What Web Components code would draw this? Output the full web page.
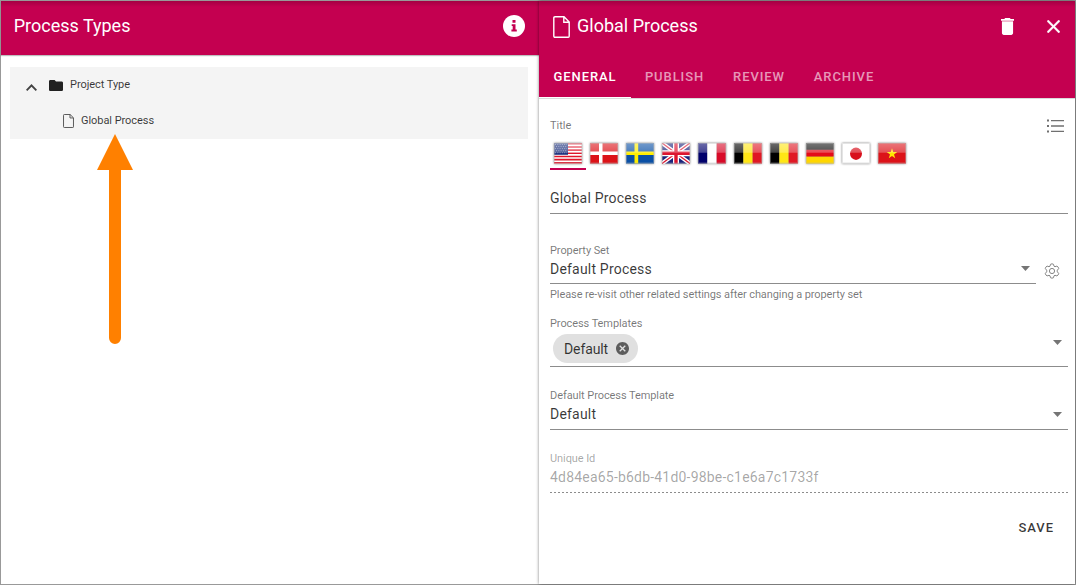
<!DOCTYPE html>
<html lang="en">
<head>
<meta charset="utf-8">
<title>Process Types</title>
<style>
html,body{margin:0;height:100%}
body{font-family:Roboto,"Liberation Sans",sans-serif;color:rgba(0,0,0,.78);background:#fff;overflow:hidden}
</style>
</head>
<body>
<process-app></process-app>
<script>
const define = (name, html, setup) => {
  const template = document.createElement('template');
  template.innerHTML = html;
  customElements.define(name, class extends HTMLElement {
    constructor() {
      super();
      this.attachShadow({mode: 'open'}).append(template.content.cloneNode(true));
    }
    connectedCallback() { if (setup) setup(this, this.shadowRoot); }
  });
};

const icons = {
  file: ['0 0 17 22', '<path d="M2 .8H11L16.2 6V20.2Q16.2 21.2 15.2 21.2H2Q.8 21.2.8 20V2Q.8.8 2 .8ZM10.8.8V6.2H16.2" fill="none" stroke="currentColor" stroke-width="var(--stroke,1.4)"/>'],
  folder: ['2 4 20 16', '<path d="M10 4H4C2.9 4 2 4.9 2 6V18C2 19.1 2.9 20 4 20H20C21.1 20 22 19.1 22 18V8C22 6.9 21.1 6 20 6H12Z"/>'],
  chevron: ['6 8 12 7.4', '<path d="M7.41 15.4 12 10.8 16.59 15.4 18 14 12 8 6 14Z"/>'],
  info: ['0 0 22 22', '<circle cx="11" cy="11" r="11"/><path fill="#c40050" d="M9.5 5h3v2.8h-3zM8.700 9.200h3.800v5.300h1.300v1.900H8.400v-1.900h1.300v-3.400h-1z"/>'],
  trash: ['5 3 14 18', '<path d="M6 19C6 20.1 6.9 21 8 21H16C17.1 21 18 20.1 18 19V7H6ZM19 4H15.5L14.5 3H9.5L8.500 4H5V6H19Z"/><path d="M6 6H18V7H6Z" opacity=".8"/>'],
  close: ['5 5 14 14', '<path stroke="currentColor" stroke-width=".5" d="M19 6.41 17.59 5 12 10.59 6.41 5 5 6.41 10.59 12 5 17.59 6.41 19 12 13.41 17.59 19 19 17.59 13.41 12Z"/>'],
  list: ['0 0 18 14', '<path d="M0 .5h2v2H0zM0 6h2v2H0zM0 11.500h2v2H0zM4 .9h13v1.300H4zM4 6.200h13v1.600H4zM4 11.700h13V13H4z"/>'],
  caret: ['7 10 10 5', '<path d="M7 10 12 15 17 10Z"/>'],
  gear: ['0 0 16 16', '<g fill="none" stroke="currentColor" stroke-width="1"><circle cx="8" cy="8" r="2.600"/><path d="M6.500 1.300Q8 .3 9.500 1.300L10 3.200 11 3.700 12.900 3.100Q14.600 3.900 14.700 5.600L13.300 7.200V8.800L14.700 10.400Q14.600 12.100 12.900 12.900L11 12.300 10 12.800 9.500 14.700Q8 15.700 6.500 14.700L6 12.800 5 12.300 3.100 12.900Q1.400 12.100 1.300 10.400L2.700 8.800V7.200L1.300 5.600Q1.400 3.900 3.100 3.100L5 3.700 6 3.200Z"/></g>'],
  remove: ['2 2 20 20', '<path d="M12 2C6.470 2 2 6.470 2 12S6.470 22 12 22 22 17.530 22 12 17.530 2 12 2ZM17 15.590 15.590 17 12 13.410 8.410 17 7 15.590 10.590 12 7 8.410 8.410 7 12 10.590 15.590 7 17 8.410 13.410 12Z"/>']
};
define('ui-icon', `<style>:host{display:block;flex:none}svg{display:block;width:100%;height:100%;fill:currentColor}</style><svg preserveAspectRatio="none"></svg>`, (el, root) => {
  const [box, art] = icons[el.getAttribute('name')];
  const svg = root.querySelector('svg');
  svg.setAttribute('viewBox', box);
  svg.innerHTML = art;
});

const bands = (colors, vertical) => colors.map((c, i) => vertical
  ? `<rect x="${i * 28 / 3}" width="9.4" height="20" fill="${c}"/>`
  : `<rect y="${i * 20 / 3}" width="28" height="6.700" fill="${c}"/>`).join('');
const flags = {
  us: '<path fill="#fff" d="M0 0h28v20H0z"/><path stroke="#e0162b" stroke-width="1.540" d="M0 .77h28M0 3.850h28M0 6.930h28M0 10h28M0 13.100h28M0 16.200h28M0 19.250h28"/><path fill="#1b2f7c" d="M0 0h14v11.500H0z"/><path stroke="#fff" stroke-width=".8" stroke-opacity=".55" stroke-dasharray="1 1.300" d="M1 1.500h12M2 3.500h11M1 5.500h12M2 7.500h11M1 9.500h12"/>',
  dk: '<path fill="#dc1218" d="M0 0h28v20H0z"/><path fill="#fff" d="M9 0h3.500v20H9zM0 8.300h28v3.500H0z"/>',
  se: '<path fill="#0a50a5" d="M0 0h28v20H0z"/><path fill="#fe0" d="M8.500 0h3.700v20H8.500zM0 8.300h28v3.500H0z"/>',
  gb: '<path fill="#1a237b" d="M0 0h28v20H0z"/><path stroke="#fff" stroke-width="4" d="M0 0 28 20M28 0 0 20"/><path stroke="#dc1530" stroke-width="1.300" d="M0 0 28 20M28 0 0 20"/><path fill="#fff" d="M11 0h6v20h-6zM0 7h28v6H0z"/><path fill="#dc1530" d="M12.300 0h3.400v20h-3.400zM0 8.300h28v3.400H0z"/>',
  fr: bands(['#00006b', '#fff', '#d80a28'], true),
  be: bands(['#000', '#ffe615', '#e01824'], true),
  de: bands(['#111', '#e30b18', '#ffd600']),
  jp: '<path fill="#fff" d="M0 0h28v20H0z"/><circle cx="14" cy="10.500" r="6" fill="#d8101c"/>',
  vn: '<path fill="#dc1218" d="M0 0h28v20H0z"/><path fill="#ffe600" d="m14 5 1.250 3.800h4L16 11.100l1.240 3.800L14 12.600l-3.240 2.300L12 11.100 8.750 8.800h4Z"/>'
};
define('flag-tab', `<style>
:host{display:flex;flex:none;box-sizing:border-box;width:36px;height:37px;padding:10px 4.500px 0 3.500px;border-bottom:2px solid transparent}
:host([selected]){border-color:#c40050}
svg{display:block;width:28px;height:20.500px;filter:drop-shadow(0 .7px .8px rgba(0,0,0,.5))}
</style><svg viewBox="0 0 28 20" preserveAspectRatio="none"><defs><linearGradient id="g" x2="0" y2="1"><stop stop-color="#fff" stop-opacity=".42"/><stop offset="1" stop-color="#fff" stop-opacity=".26"/></linearGradient></defs><g id="art"></g><path fill="url(#g)" d="M0 0h28v9.500H0Z"/><path fill="none" stroke="#bbb" stroke-opacity=".4" stroke-width="1" d="M.5.5h27v19H.5z"/></svg>`, (el, root) => {
  root.querySelector('#art').innerHTML = flags[el.getAttribute('country')];
});

define('tool-bar', `<style>
:host{display:flex;align-items:center;height:50px;color:#fff;font-size:18px}
.t{flex:1;display:flex;align-items:center;white-space:nowrap}
</style><slot name="icon"></slot><div class="t"><slot></slot></div><slot name="action"></slot>`);

define('tab-item', `<style>
:host{display:flex;align-items:center;justify-content:center;box-sizing:border-box;height:43px;border-bottom:1px solid transparent;color:rgba(255,255,255,.6);font-size:13px;font-weight:500;letter-spacing:.92px;white-space:nowrap}
:host([selected]){color:#fff;border-color:#fff}
</style><slot></slot>`);

define('tree-row', `<style>
:host{display:flex;align-items:center;height:36px;font-size:11px;letter-spacing:-.05px;white-space:nowrap;box-sizing:border-box;padding-bottom:1px}
</style><slot></slot>`);

define('form-field', `<style>
:host{display:block}
.label{height:16px;line-height:18px;font-size:11px;letter-spacing:-.08px;color:rgba(0,0,0,.54);white-space:nowrap}
.box{display:flex;box-sizing:border-box;align-items:flex-start;border-bottom:1px solid #8c8c8c;height:var(--box,27px)}
.value{flex:1;line-height:22px;font-size:14px;letter-spacing:.2px;white-space:nowrap}
ui-icon{width:9px;height:5px;color:#757575;margin:var(--caret-top,9px) 6px 0 0}
:host([plain]) ui-icon{display:none}
:host([disabled]) .label,:host([disabled]) .value{color:rgba(0,0,0,.36)}
:host([disabled]) .box{border-bottom:0;background:repeating-linear-gradient(90deg,#8c8c8c 0 2px,transparent 2px 4px) bottom/100% 1px no-repeat}
</style><div class="label"></div><div class="box"><div class="value"><slot></slot></div><ui-icon name="caret"></ui-icon></div>`, (el, root) => {
  root.querySelector('.label').textContent = el.getAttribute('label');
});

define('value-chip', `<style>
:host{display:inline-flex;box-sizing:border-box;align-items:center;justify-content:space-between;width:85px;height:29px;margin:3px 0 0 3px;padding:0 9px 0 11px;border-radius:15px;background:#e0e0e0;letter-spacing:-.1px}
ui-icon{width:13px;height:13px;color:#5c5c5c}
</style><span><slot></slot></span><ui-icon name="remove"></ui-icon>`);

define('pointer-arrow', `<style>:host{display:block}svg{display:block}</style><svg width="36" height="210" viewBox="0 0 36 210" fill="#ff8000"><path d="M18 0 36 36H24V204a6 6 0 0 1-12 0V36H0Z"/></svg>`);

define('process-tree', `<style>
:host{display:block;position:relative;width:538px;flex:none;background:#fff}
header{height:54px;box-sizing:border-box;padding:0 14px 0 12.700px;background:linear-gradient(#a40043,#c40050 6px);box-shadow:0 1px 1px rgba(0,0,0,.25)}
tool-bar{height:49px}
.info{width:22px;height:22px;margin-top:1px}
.tree{margin:12px 11px 0 9px;background:#f4f4f4;height:72px}
.up{width:11px;height:7px;margin:6px 0 0 16px;color:#424242}
.folder{width:14px;height:11px;margin:1px 7px 0 12px;color:#212121}
.file{width:11px;height:14px;margin:1px 7px 0 53px;color:#555;--stroke:1.5}
pointer-arrow{position:absolute;left:96px;top:133px}
</style>
<header><tool-bar>Process Types<ui-icon slot="action" class="info" name="info"></ui-icon></tool-bar></header>
<div class="tree">
<tree-row><ui-icon class="up" name="chevron"></ui-icon><ui-icon class="folder" name="folder"></ui-icon><span>Project Type</span></tree-row>
<tree-row><ui-icon class="file" name="file"></ui-icon><span>Global Process</span></tree-row>
</div>
<pointer-arrow></pointer-arrow>`);

define('process-editor', `<style>
:host{display:block;flex:1;min-width:0;background:#fff;box-shadow:0 0 3px rgba(0,0,0,.5);z-index:1}
header{height:97px;background:linear-gradient(#a40043,#c40050 6px);box-shadow:0 1px 0 #dadada}
tool-bar{height:54px;padding:0 15px 5px 14px;box-sizing:border-box}
.file{width:17px;height:22px;margin:3px 7px 0 0}
.trash{width:13px;height:17px;margin-top:1px}
.close{width:13px;height:13px;margin-left:33px;margin-top:1px}
nav{display:flex}
.body{padding:19px 7px 0 11px;display:flex;flex-direction:column}
.head{display:flex;justify-content:space-between;height:16px;line-height:18px;font-size:11px;color:rgba(0,0,0,.54)}
.list{width:18px;height:14px;margin:2px 3px 0 0;color:#707070}
.flags{display:flex}
.name{height:44px;box-sizing:border-box;border-bottom:1px solid #8c8c8c;padding-top:17px;line-height:22px;font-size:14px;letter-spacing:.2px}
.set{display:flex;margin-top:28px}
.set form-field{width:486px;--box:26px;--caret-top:8px}
.gear{width:16px;height:16px;margin:21px 0 0 8px;color:#858585}
.hint{margin-top:2px;height:16px;line-height:18px;font-size:11px;letter-spacing:-.09px;color:rgba(0,0,0,.54)}
.templates{margin-top:13px;--box:36px}
.gap{margin-top:20px}
.save{align-self:flex-end;margin:27px 14px 0 0;font-size:13px;line-height:16px;font-weight:500;letter-spacing:.95px}
</style>
<header>
<tool-bar><ui-icon slot="icon" class="file" name="file"></ui-icon>Global Process<ui-icon slot="action" class="trash" name="trash"></ui-icon><ui-icon slot="action" class="close" name="close"></ui-icon></tool-bar>
<nav><tab-item selected style="width:92px">GENERAL</tab-item><tab-item style="width:87px">PUBLISH</tab-item><tab-item style="width:82px">REVIEW</tab-item><tab-item style="width:88px">ARCHIVE</tab-item></nav>
</header>
<div class="body">
<div class="head"><span>Title</span><ui-icon class="list" name="list"></ui-icon></div>
<div class="flags"><flag-tab selected country="us"></flag-tab><flag-tab country="dk"></flag-tab><flag-tab country="se"></flag-tab><flag-tab country="gb"></flag-tab><flag-tab country="fr"></flag-tab><flag-tab country="be"></flag-tab><flag-tab country="be"></flag-tab><flag-tab country="de"></flag-tab><flag-tab country="jp"></flag-tab><flag-tab country="vn"></flag-tab></div>
<div class="name">Global Process</div>
<div class="set"><form-field label="Property Set">Default Process</form-field><ui-icon class="gear" name="gear"></ui-icon></div>
<div class="hint">Please re-visit other related settings after changing a property set</div>
<form-field class="templates" label="Process Templates"><value-chip>Default</value-chip></form-field>
<form-field class="gap" label="Default Process Template">Default</form-field>
<form-field class="gap" plain disabled label="Unique Id">4d84ea65-b6db-41d0-98be-c1e6a7c1733f</form-field>
<div class="save">SAVE</div>
</div>`);

define('process-app', `<style>
:host{display:flex;box-sizing:border-box;width:1076px;height:585px;border:1px solid #999}
</style><process-tree></process-tree><process-editor></process-editor>`);
</script>
</body>
</html>
